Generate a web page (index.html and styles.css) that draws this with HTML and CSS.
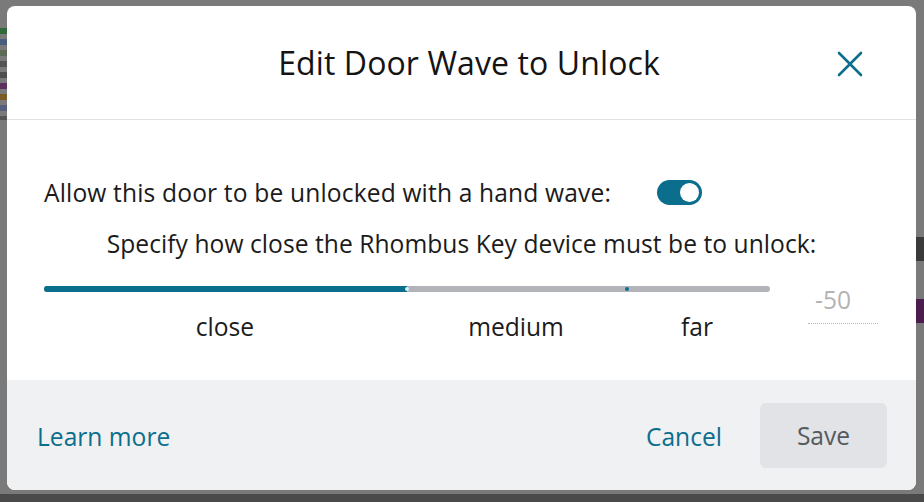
FILE: index.html
```html
<!DOCTYPE html>
<html>
<head>
<meta charset="utf-8">
<link rel="stylesheet" href="styles.css">
</head>
<body>
<div class="backdrop">
  <div class="strips">
    <span class="strip s1"></span><span class="strip s2"></span><span class="strip s3"></span>
    <span class="strip s4"></span><span class="strip s5"></span><span class="strip s6"></span>
    <span class="strip s7"></span><span class="strip s8"></span><span class="strip s9"></span>
  </div>
  <div class="right-bits">
    <span class="rb rb1"></span>
    <span class="rb rb2"></span>
  </div>
  <div class="bottom-bar"></div>
</div>
<div class="modal">
  <header class="modal-header">
    <h1 class="title">Edit Door Wave to Unlock</h1>
    <button class="close" aria-label="Close">
      <svg width="26" height="26" viewBox="0 0 26 26"><path d="M2 2 L24 24 M24 2 L2 24" stroke="#0b6e8c" stroke-width="2.6" stroke-linecap="round"/></svg>
    </button>
  </header>
  <section class="modal-body">
    <div class="toggle-row">
      <span class="label">Allow this door to be unlocked with a hand wave:</span>
      <span class="toggle"><span class="knob"></span></span>
    </div>
    <p class="specify">Specify how close the Rhombus Key device must be to unlock:</p>
    <div class="slider-row">
      <div class="slider">
        <div class="track">
          <div class="fill" style="width:50%"></div>
          <span class="dot dot-thumb" style="left:50%"></span>
          <span class="dot dot-mark" style="left:80.3%"></span>
        </div>
        <div class="labels">
          <span class="lbl l-close">close</span>
          <span class="lbl l-medium">medium</span>
          <span class="lbl l-far">far</span>
        </div>
      </div>
      <div class="value">-50</div>
    </div>
  </section>
  <footer class="modal-footer">
    <a class="link">Learn more</a>
    <div class="actions">
      <a class="link cancel">Cancel</a>
      <button class="save">Save</button>
    </div>
  </footer>
</div>
</body>
</html>
```
FILE: styles.css
```css
* { box-sizing: border-box; }
html, body { margin: 0; padding: 0; }
body {
  width: 924px;
  height: 502px;
  overflow: hidden;
  background: #7a7a7a;
  font-family: "Open Sans", "Noto Sans", sans-serif;
  position: relative;
}
.backdrop { position: absolute; inset: 0; }
.strips { position: absolute; left: 0; top: 28px; width: 8px; display: flex; flex-direction: column; gap: 5px; }
.strip { display: block; height: 6px; }
.s1 { background: #2f6a38; }
.s2 { background: #4a5f80; }
.s3 { background: #5d6b55; }
.s4 { background: #545454; }
.s5 { background: #4e4e4e; }
.s6 { background: #5c2f5e; }
.s7 { background: #7d5b25; }
.s8 { background: #56607e; }
.s9 { background: #555; height: 4px; }
.right-bits { position: absolute; right: 0; top: 237px; width: 8px; }
.rb { display: block; height: 24px; }
.rb1 { background: #3a3a3a; }
.rb2 { background: #4c1d4c; margin-top: 38px; }
.bottom-bar { position: absolute; left: 0; right: 0; bottom: 0; height: 8px; background: #4a4a4a; }

.modal {
  position: absolute;
  left: 7px;
  top: 6px;
  width: 909px;
  height: 484px;
  background: #fff;
  border-radius: 8px;
  overflow: hidden;
  display: flex;
  flex-direction: column;
}
.modal-header {
  height: 114px;
  border-bottom: 1px solid #e1e2e4;
  display: flex;
  align-items: center;
  justify-content: center;
  position: relative;
  flex: none;
}
.title {
  margin: 0 0 0 15px;
  font-weight: 400;
  font-size: 32px;
  color: #141414;
  letter-spacing: 0.1px;
}
.close {
  position: absolute;
  right: 53px;
  top: 45px;
  width: 26px;
  height: 26px;
  padding: 0;
  border: 0;
  background: none;
  display: flex;
}
.modal-body {
  flex: 1;
  padding: 57px 37px 0 37px;
  color: #1b1b1b;
  font-size: 24.6px;
}
.toggle-row {
  display: flex;
  align-items: center;
  height: 30px;
}
.label { margin-right: 46px; white-space: nowrap; letter-spacing: 0.15px; }
.toggle {
  width: 45px;
  height: 25px;
  border-radius: 13px;
  background: #0b6e8c;
  position: relative;
  display: inline-block;
  flex: none;
}
.knob {
  position: absolute;
  right: 3px;
  top: 3px;
  width: 19px;
  height: 19px;
  border-radius: 50%;
  background: #fff;
}
.specify {
  margin: 22px 0 0 0;
  text-align: center;
  line-height: 30px;
  white-space: nowrap;
  letter-spacing: 0.05px;
}
.slider-row {
  display: flex;
  margin-top: 27px;
}
.slider { width: 726px; flex: none; }
.track {
  height: 6px;
  border-radius: 3px;
  background: #b2b4ba;
  position: relative;
}
.fill {
  height: 6px;
  border-radius: 3px 0 0 3px;
  background: #0b6e8c;
}
.dot {
  position: absolute;
  top: 1px;
  width: 4px;
  height: 4px;
  border-radius: 50%;
  margin-left: -2px;
}
.dot-thumb { background: #d8f1fb; }
.dot-mark { background: #0b6e8c; }
.labels {
  position: relative;
  height: 30px;
  margin-top: 20px;
}
.lbl { position: absolute; top: 0; transform: translateX(-50%); line-height: 30px; }
.l-close { left: 181px; }
.l-medium { left: 472px; }
.l-far { left: 653px; }
.value {
  margin-left: 38px;
  width: 70px;
  height: 39px;
  margin-top: -1px;
  border-bottom: 1px dotted #b8b8b8;
  color: #b3b3b3;
  padding-left: 7px;
  line-height: 30px;
}
.modal-footer {
  height: 110px;
  flex: none;
  background: #f0f1f3;
  display: flex;
  align-items: center;
  justify-content: space-between;
  padding: 0 29px 0 30px;
}
.link {
  color: #0b6e8c;
  font-size: 24.6px;
  cursor: pointer;
  line-height: 30px;
  padding-top: 3px;
}
.actions { display: flex; align-items: center; gap: 38px; }
.save {
  width: 127px;
  height: 65px;
  border: 0;
  border-radius: 6px;
  background: #e1e3e6;
  color: #555a5e;
  font-family: inherit;
  font-size: 24.6px;
  padding: 0;
}
```
